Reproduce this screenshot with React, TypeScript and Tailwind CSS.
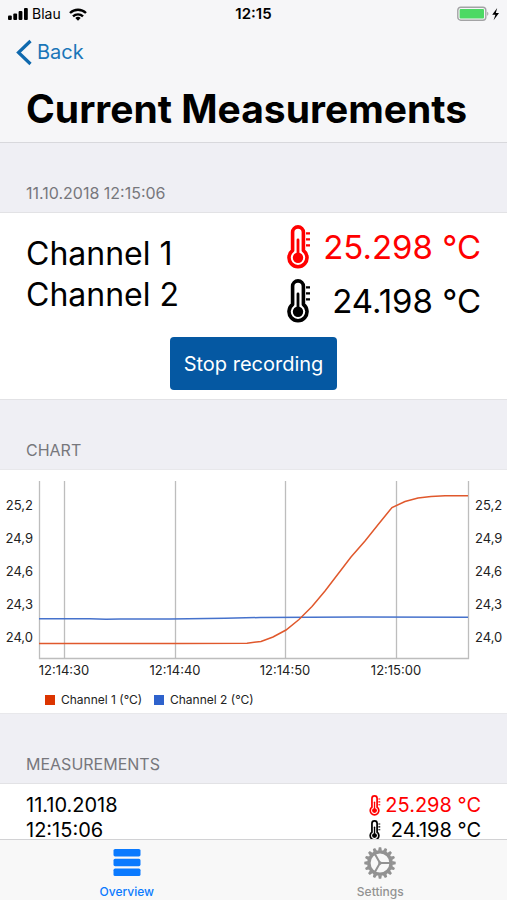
import React from "react";

interface Reading {
  label: string;
  value: string;
  tone: string;
}

interface Point {
  x: number;
  y: number;
}

const READINGS: Reading[] = [
  { label: "Channel 1", value: "25.298 °C", tone: "text-[#ff0000]" },
  { label: "Channel 2", value: "24.198 °C", tone: "text-black" },
];

const Y_TICKS = [
  { label: "25,2", y: 36 },
  { label: "24,9", y: 69 },
  { label: "24,6", y: 102 },
  { label: "24,3", y: 135 },
  { label: "24,0", y: 168 },
];

const X_TICKS = [
  { label: "12:14:30", x: 64 },
  { label: "12:14:40", x: 175 },
  { label: "12:14:50", x: 285 },
  { label: "12:15:00", x: 396 },
];

const CHANNEL_1: Point[] = [
  { x: 39, y: 173.5 },
  { x: 180, y: 173.5 },
  { x: 247, y: 173.2 },
  { x: 261, y: 171.5 },
  { x: 273, y: 167 },
  { x: 286, y: 160 },
  { x: 299, y: 149.5 },
  { x: 312, y: 136.5 },
  { x: 325, y: 121 },
  { x: 338, y: 104 },
  { x: 351, y: 87 },
  { x: 365, y: 71 },
  { x: 379, y: 53.5 },
  { x: 392, y: 37.5 },
  { x: 405, y: 31.5 },
  { x: 418, y: 28 },
  { x: 431, y: 26.5 },
  { x: 445, y: 25.7 },
  { x: 468, y: 25.7 },
];

const CHANNEL_2: Point[] = [
  { x: 39, y: 148.7 },
  { x: 90, y: 148.8 },
  { x: 106, y: 149.3 },
  { x: 120, y: 148.9 },
  { x: 170, y: 148.9 },
  { x: 225, y: 148.3 },
  { x: 260, y: 147.5 },
  { x: 360, y: 147 },
  { x: 468, y: 147.2 },
];

const toPoints = (points: Point[]) =>
  points.map((p) => `${p.x},${p.y}`).join(" ");

function Thermometer({ className }: { className: string }) {
  return (
    <svg viewBox="0 0 24 44" className={className} fill="none" aria-hidden="true">
      <path
        d="M5.6 25.5V7.3a5.4 5.4 0 0 1 10.8 0v18.2a9 9 0 1 1-10.8 0z"
        stroke="currentColor"
        strokeWidth="3.6"
        strokeLinejoin="round"
      />
      <path d="M11 15v18" stroke="currentColor" strokeWidth="2.8" strokeLinecap="round" />
      <circle cx="11" cy="32.7" r="5.2" fill="currentColor" />
      <path
        d="M19 8.4H23M19 14.4H23M19 20.4H23"
        stroke="currentColor"
        strokeWidth="2.4"
      />
    </svg>
  );
}

function StatusBar() {
  return (
    <div className="grid h-7 grid-cols-3 items-center px-2 text-sm text-black">
      <div className="flex items-center gap-1">
        <svg width="20" height="14" viewBox="0 0 20 14" aria-hidden="true">
          <rect x="0" y="8.5" width="3.8" height="4.5" rx="1" />
          <rect x="5.3" y="6.5" width="3.8" height="6.5" rx="1" />
          <rect x="10.6" y="4" width="3.8" height="9" rx="1" />
          <rect x="16" y="1" width="3.8" height="12" rx="1" />
        </svg>
        <span>Blau</span>
        <svg
          width="18"
          height="13"
          viewBox="0 0 18 13"
          className="ml-1"
          fill="none"
          stroke="currentColor"
          strokeWidth="2.4"
          aria-hidden="true"
        >
          <path d="M1 5a11.5 11.5 0 0 1 16 0" />
          <path d="M4 8.4a7.2 7.2 0 0 1 10 0" />
          <path d="M9 12.8 6.3 10.1a3.9 3.9 0 0 1 5.4 0z" fill="currentColor" stroke="none" />
        </svg>
      </div>
      <span className="text-center text-[15px] font-semibold">12:15</span>
      <div className="flex items-center justify-end">
        <svg width="42" height="16" viewBox="0 0 42 16" aria-hidden="true">
          <rect x=".8" y="1.2" width="28" height="13" rx="3" fill="#f6f6f8" stroke="#a3a3a5" strokeWidth="1.4" />
          <rect x="2.6" y="3" width="24.4" height="9.4" rx="1" fill="#4cd964" />
          <path d="M30.2 5.8c1.6.5 1.6 3.5 0 4z" fill="#a3a3a5" />
          <path d="M40.2 2 35.2 8.8h3.2L36.6 14.2l5.4-7.2h-3.2z" fill="#000" />
        </svg>
      </div>
    </div>
  );
}

function SectionTitle({ children }: { children: React.ReactNode }) {
  return (
    <h2 className="flex h-[69px] items-end px-[26px] pb-[7px] text-base text-[#77777c]">
      {children}
    </h2>
  );
}

function Chart() {
  return (
    <svg
      viewBox="0 0 507 243"
      className="block w-full"
      role="img"
      aria-label="Temperature chart"
    >
      <g stroke="#bdbdbd" strokeWidth="1.3" fill="none">
        {X_TICKS.map((tick) => (
          <path key={tick.label} d={`M${tick.x + 0.5} 11V188`} />
        ))}
        <path d="M39.5 11V188.5H468.5V11" />
      </g>
      <polyline points={toPoints(CHANNEL_2)} fill="none" stroke="#4672cc" strokeWidth="1.5" />
      <polyline points={toPoints(CHANNEL_1)} fill="none" stroke="#e0582c" strokeWidth="1.5" />
      <g className="text-[13px]" fill="#222">
        {Y_TICKS.map((tick) => (
          <React.Fragment key={tick.label}>
            <text x="33" y={tick.y + 4} textAnchor="end">
              {tick.label}
            </text>
            <text x="475" y={tick.y + 4}>
              {tick.label}
            </text>
          </React.Fragment>
        ))}
        {X_TICKS.map((tick) => (
          <text key={tick.label} x={tick.x} y="205" textAnchor="middle">
            {tick.label}
          </text>
        ))}
      </g>
      <g className="text-[12px]" fill="#222">
        <rect x="45" y="225" width="10" height="10" fill="#dc3500" />
        <text x="61" y="234">Channel 1 (°C)</text>
        <rect x="154" y="225" width="10" height="10" fill="#2e62cc" />
        <text x="170" y="234">Channel 2 (°C)</text>
      </g>
    </svg>
  );
}

function Gear() {
  const teeth = Array.from({ length: 16 }, (_, i) => i * 22.5);
  return (
    <svg width="32" height="32" viewBox="-16 -16 32 32" aria-hidden="true">
      <g fill="currentColor">
        {teeth.map((angle) => (
          <path key={angle} d="M-1.9-12.2-1.2-15.7H1.2L1.9-12.2z" transform={`rotate(${angle})`} />
        ))}
      </g>
      <g fill="none" stroke="currentColor">
        <circle r="11.1" strokeWidth="3.4" />
        <path d="M0 0H10M0 0-5-8.7M0 0-5 8.7" strokeWidth="2" />
        <circle r="1" strokeWidth="1.4" />
      </g>
    </svg>
  );
}

export default function App() {
  return (
    <div className="flex h-screen flex-col bg-[#efeff4] font-['Inter','Liberation_Sans',sans-serif] text-black">
      <header className="border-b border-[#d8d8dc] bg-[#f6f6f8]">
        <StatusBar />
        <nav className="flex h-12 items-center px-4">
          <button type="button" className="flex items-center gap-1 text-xl text-[#1b76b8]">
            <svg width="17" height="27" viewBox="0 0 17 27" fill="none" aria-hidden="true">
              <path d="M14.5 2 2.5 13.5l12 11.5" stroke="#0f69ae" strokeWidth="3.2" />
            </svg>
            Back
          </button>
        </nav>
        <h1 className="px-[26px] py-2 text-[39px] leading-[50px] font-bold whitespace-nowrap">
          Current Measurements
        </h1>
      </header>

      <main className="min-h-0 flex-1 overflow-y-auto [scrollbar-width:none]">
        <SectionTitle>11.10.2018 12:15:06</SectionTitle>
        <section className="border-y border-[#e2e2e5] bg-white px-[26px] pt-[7px] pb-[9px]">
          <div className="flex items-start justify-between">
            <div className="pt-[13px] text-[32px] leading-[41px]">
              {READINGS.map((r) => (
                <p key={r.label}>{r.label}</p>
              ))}
            </div>
            <div className="text-[33px] leading-[54px]">
              {READINGS.map((r) => (
                <p key={r.label} className={`flex items-center justify-between gap-3 ${r.tone}`}>
                  <Thermometer className="h-11 w-6" />
                  {r.value}
                </p>
              ))}
            </div>
          </div>
          <div className="mt-[9px] flex justify-center">
            <button
              type="button"
              className="h-[53px] rounded-sm bg-[#0558a2] px-[14px] text-xl text-white"
            >
              Stop recording
            </button>
          </div>
        </section>

        <SectionTitle>CHART</SectionTitle>
        <section className="border-y border-[#e8e8eb] bg-white">
          <Chart />
        </section>

        <SectionTitle>MEASUREMENTS</SectionTitle>
        <section className="flex justify-between border-y border-[#e2e2e5] bg-white px-[26px] py-[9px] text-xl leading-[25px]">
          <div>
            <p>11.10.2018</p>
            <p>12:15:06</p>
          </div>
          <div>
            {READINGS.map((r) => (
              <p key={r.label} className={`flex items-center justify-between gap-1 ${r.tone}`}>
                <Thermometer className="h-[21px] w-3" />
                {r.value}
              </p>
            ))}
          </div>
        </section>
      </main>

      <nav className="grid h-[61px] shrink-0 grid-cols-2 border-t border-[#d2d2d4] bg-[#f8f8f8] text-xs font-medium">
        <button type="button" className="flex flex-col items-center justify-between pt-2 text-[#0a7aff]">
          <svg width="28" height="30" viewBox="0 0 28 30" fill="currentColor" aria-hidden="true">
            <rect x=".5" y="1" width="27" height="7.4" rx="1.6" />
            <rect x=".5" y="10.8" width="27" height="7.4" rx="1.6" />
            <rect x=".5" y="20.6" width="27" height="7.4" rx="1.6" />
          </svg>
          Overview
        </button>
        <button type="button" className="flex flex-col items-center justify-between pt-[7px] text-[#929292]">
          <Gear />
          Settings
        </button>
      </nav>
    </div>
  );
}
